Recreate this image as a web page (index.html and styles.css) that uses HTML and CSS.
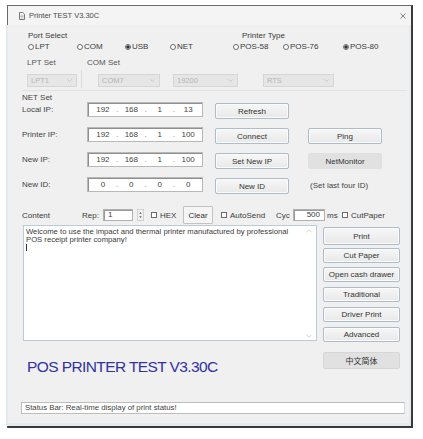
FILE: index.html
```html
<!DOCTYPE html>
<html>
<head>
<meta charset="utf-8">
<title>Printer TEST V3.30C</title>
<link rel="stylesheet" href="styles.css">
</head>
<body>
<div class="window">
  <div class="titlebar">
    <svg class="appicon" width="6" height="8" viewBox="0 0 6 8"><path d="M0.5 0.5h3.3l1.7 1.7v5.3h-5z" fill="#fff" stroke="#6a6a6a" stroke-width="0.9"/><path d="M1.4 3.2h3.2M1.4 4.6h3.2M1.4 6h3.2" stroke="#8a8a8a" stroke-width="0.6"/></svg>
    <span class="title">Printer TEST V3.30C</span>
    <svg class="close" width="6" height="6" viewBox="0 0 6 6"><path d="M0.5 0.5l5 5M5.5 0.5l-5 5" stroke="#666" stroke-width="0.8"/></svg>
  </div>
  <div class="client">
    <div class="toprow">
      <div class="grp port">
        <div class="glabel">Port Select</div>
        <div class="radios">
          <span class="radio r49"><i class="dot"></i>LPT</span>
          <span class="radio r48"><i class="dot"></i>COM</span>
          <span class="radio r45"><i class="dot on"></i>USB</span>
          <span class="radio"><i class="dot"></i>NET</span>
        </div>
      </div>
      <div class="grp ptype">
        <div class="glabel ind">Printer Type</div>
        <div class="radios">
          <span class="radio r50"><i class="dot"></i>POS-58</span>
          <span class="radio r60"><i class="dot"></i>POS-76</span>
          <span class="radio"><i class="dot on"></i>POS-80</span>
        </div>
      </div>
    </div>

    <div class="sets">
      <div class="lptset">
        <div class="slabel">LPT Set</div>
        <div class="combo w50"><span>LPT1</span><svg width="5" height="3" viewBox="0 0 5 3"><path d="M0.3 0.3l2.2 2.2 2.2-2.2" fill="none" stroke="#bbb" stroke-width="0.7"/></svg></div>
      </div>
      <div class="vsep"></div>
      <div class="comset">
        <div class="slabel">COM Set</div>
        <div class="combos">
          <div class="combo w62"><span>COM7</span><svg width="5" height="3" viewBox="0 0 5 3"><path d="M0.3 0.3l2.2 2.2 2.2-2.2" fill="none" stroke="#bbb" stroke-width="0.7"/></svg></div>
          <div class="combo w65 gap13"><span>19200</span><svg width="5" height="3" viewBox="0 0 5 3"><path d="M0.3 0.3l2.2 2.2 2.2-2.2" fill="none" stroke="#bbb" stroke-width="0.7"/></svg></div>
          <div class="combo w71 gap25"><span>RTS</span><svg width="5" height="3" viewBox="0 0 5 3"><path d="M0.3 0.3l2.2 2.2 2.2-2.2" fill="none" stroke="#bbb" stroke-width="0.7"/></svg></div>
        </div>
      </div>
    </div>

    <div class="hsep"></div>

    <div class="netlabel">NET Set</div>
    <div class="netrow">
      <div class="lbl">Local IP:</div>
      <div class="ipbox"><span class="oct">192</span><span class="ipdot">.</span><span class="oct">168</span><span class="ipdot">.</span><span class="oct">1</span><span class="ipdot">.</span><span class="oct">13</span></div>
      <div class="btn b74 first">Refresh</div>
    </div>
    <div class="netrow">
      <div class="lbl">Printer IP:</div>
      <div class="ipbox"><span class="oct">192</span><span class="ipdot">.</span><span class="oct">168</span><span class="ipdot">.</span><span class="oct">1</span><span class="ipdot">.</span><span class="oct">100</span></div>
      <div class="btn b74 first">Connect</div>
      <div class="btn b74 second">Ping</div>
    </div>
    <div class="netrow">
      <div class="lbl">New IP:</div>
      <div class="ipbox"><span class="oct">192</span><span class="ipdot">.</span><span class="oct">168</span><span class="ipdot">.</span><span class="oct">1</span><span class="ipdot">.</span><span class="oct">100</span></div>
      <div class="btn b74 first">Set New IP</div>
      <div class="btn b74 second flat">NetMonitor</div>
    </div>
    <div class="netrow">
      <div class="lbl">New ID:</div>
      <div class="ipbox"><span class="oct">0</span><span class="ipdot">.</span><span class="oct">0</span><span class="ipdot">.</span><span class="oct">0</span><span class="ipdot">.</span><span class="oct">0</span></div>
      <div class="btn b74 first">New ID</div>
      <div class="note">(Set last four ID)</div>
    </div>

    <div class="ctrlrow">
      <span class="c-content">Content</span>
      <span class="c-rep">Rep:</span>
      <span class="edit spin">1</span>
      <span class="spinbtn"><svg width="6" height="12" viewBox="0 0 6 12"><path d="M1.5 4.5L3 2.5 4.5 4.5z M1.5 7.5L3 9.5 4.5 7.5z" fill="#555"/></svg></span>
      <span class="chk c-hex"><i class="box"></i>HEX</span>
      <span class="btn clear">Clear</span>
      <span class="chk c-auto"><i class="box"></i>AutoSend</span>
      <span class="c-cyc">Cyc</span>
      <span class="edit cyc">500</span>
      <span class="c-ms">ms</span>
      <span class="chk"><i class="box"></i>CutPaper</span>
    </div>

    <div class="main">
      <div class="leftcol">
        <div class="textarea">
          <div class="tatext">Welcome to use the impact and thermal printer manufactured by professional<br>POS receipt printer company!<br><span class="caret"></span></div>
          <div class="scroll">
            <svg width="6" height="4" viewBox="0 0 6 4"><path d="M0.5 3.3L3 0.8 5.5 3.3" fill="none" stroke="#c4c4c4" stroke-width="0.8"/></svg>
            <svg width="6" height="4" viewBox="0 0 6 4"><path d="M0.5 0.7L3 3.2 5.5 0.7" fill="none" stroke="#c4c4c4" stroke-width="0.8"/></svg>
          </div>
        </div>
        <div class="bigtitle">POS PRINTER TEST V3.30C</div>
      </div>
      <div class="rightcol">
        <div class="btn rb print">Print</div>
        <div class="btn rb m3">Cut Paper</div>
        <div class="btn rb m4">Open cash drawer</div>
        <div class="btn rb m5">Traditional</div>
        <div class="btn rb m5">Driver Print</div>
        <div class="btn rb m5">Advanced</div>
        <div class="btn rb flat cn">中文简体</div>
      </div>
    </div>

    <div class="status">Status Bar: Real-time display of print status!</div>
  </div>
</div>
</body>
</html>
```

FILE: styles.css
```css
* { box-sizing: border-box; }
html, body { margin: 0; padding: 0; background: #ffffff; }
body {
  font-family: "Liberation Sans", Arial, sans-serif;
  font-size: 8px;
  color: #3a3a3a;
}
.window {
  margin: 5px 0 0 7px;
  width: 406px;
  height: 423px;
  border: 1px solid #6a6a6a;
  border-right: 2px solid #3a3a3a;
  border-bottom: 2px solid #3a3a3a;
  background: #f0f0f0;
  display: flex;
  flex-direction: column;
}
.titlebar {
  height: 19px;
  display: flex;
  align-items: center;
  background: #f4f4f4;
  flex: none;
}
.appicon { margin-left: 11px; flex: none; }
.title { margin-left: 4px; font-size: 7.5px; color: #4a4a4a; }
.close { margin-left: auto; margin-right: 5px; }

.client {
  flex: 1;
  padding-left: 14px;
  border-left: 2px solid #e3ebee;
  border-right: 2px solid #e3ebee;
  border-bottom: 3px solid #e3ebee;
  margin-left: -2px;
}

/* top radio groups */
.toprow { display: flex; margin-top: 6px; padding-left: 6px; }
.port { width: 205px; }
.glabel { height: 10px; line-height: 10px; }
.glabel.ind { margin-left: 9px; }
.radios { display: flex; align-items: center; height: 11px; }
.radio { display: flex; align-items: center; flex: none; }
.r45 { width: 45px; } .r48 { width: 48px; } .r49 { width: 49px; }
.r50 { width: 50px; } .r60 { width: 60px; }
.dot {
  width: 6px; height: 6px;
  border: 0.8px solid #6b6b6b;
  border-radius: 50%;
  background: #fff;
  margin-right: 1px;
  flex: none;
}
.dot.on { background: radial-gradient(circle, #333 0 1.4px, #fff 1.9px); }

/* settings combos */
.sets { display: flex; margin-top: 6px; padding-left: 5px; }
.lptset { width: 50px; flex: none; }
.slabel { height: 10px; line-height: 10px; color: #555; }
.combo {
  margin-top: 6px;
  height: 13px;
  border: 1px solid #d6d6d6;
  background: #e6e6e6;
  color: #b5b5b5;
  display: flex;
  align-items: center;
  justify-content: space-between;
  padding: 0 4px 0 3px;
  font-size: 7.5px;
}
.w50 { width: 50px; } .w62 { width: 62px; } .w65 { width: 65px; } .w71 { width: 71px; }
.gap13 { margin-left: 13px; } .gap25 { margin-left: 25px; }
.vsep { width: 1px; background: #dadada; margin: 12px 5px 0 4px; height: 18px; flex: none; }
.comset { flex: none; }
.combos { display: flex; margin-left: 11px; }

.hsep { margin-top: 2px; height: 1px; background: #e2e2e2; margin-right: 2px; }

/* NET */
.netlabel { margin-top: 2px; height: 9px; line-height: 9px; color: #444; }
.netrow { display: flex; align-items: flex-start; height: 25px; }
.netrow .lbl { width: 65px; line-height: 15px; flex: none; color: #444; }
.ipbox {
  width: 116px; height: 15px; flex: none;
  border: 1px solid #b8b8b8;
  box-shadow: inset 1px 1px 0 #8f8f8f;
  background: #fff;
  display: flex;
  align-items: center;
  padding: 0 1px 0 2px;
  color: #444;
}
.oct { width: 26px; text-align: center; }
.ipdot { width: 2.66px; text-align: center; color: #777; }
.btn {
  display: flex;
  align-items: center;
  justify-content: center;
  border: 1px solid #acbccb;
  border-radius: 2px;
  background: linear-gradient(#f7f7f7, #e8e8e8);
  box-shadow: inset 0 0 0 1px #fbfbfb;
  color: #333;
  flex: none;
  white-space: nowrap;
}
.btn.flat {
  border-color: #e0e0e0;
  background: #e1e1e1;
  box-shadow: none;
}
.b74 { width: 74px; height: 16px; margin-top: 1px; }
.b74.first { margin-left: 12px; }
.b74.second { margin-left: 19px; }
.note { margin-left: 21px; margin-top: 1px; line-height: 16px; color: #444; }

/* controls row */
.ctrlrow { display: flex; align-items: center; height: 18px; margin-top: 4px; }
.ctrlrow > span { flex: none; }
.c-content { width: 60px; }
.c-rep { width: 21px; }
.edit {
  height: 12px;
  border: 1px solid #b0b0b0;
  box-shadow: inset 1px 1px 0 #9a9a9a;
  background: #fff;
  line-height: 10px;
}
.spin { width: 30px; padding-left: 4px; }
.spinbtn {
  margin-left: 4px; width: 7px; height: 12px;
  border: 1px solid #d0d0d0; background: #f2f2f2;
  display: flex; align-items: center; justify-content: center;
}
.chk { display: flex; align-items: center; }
.chk .box {
  width: 6px; height: 6px;
  border: 0.8px solid #6b6b6b;
  background: #fff;
  margin-right: 3px;
  flex: none;
}
.c-hex { margin-left: 7px; width: 32px; }
.btn.clear {
  width: 30px; height: 18px;
  border-radius: 1px;
  border-color: #c2c2c2;
  background: #f5f5f5;
  box-shadow: none;
}
.c-auto { margin-left: 8px; width: 55px; }
.c-cyc { width: 17px; }
.edit.cyc { width: 32px; text-align: right; padding-right: 4px; }
.c-ms { margin-left: 2px; width: 15px; }

/* main */
.main { display: flex; align-items: flex-start; margin-top: 1px; }
.leftcol { width: 295px; flex: none; }
.textarea {
  margin-left: 1px;
  width: 294px;
  height: 116px;
  border: 1px solid #b9cbd7;
  background: #fff;
  display: flex;
}
.tatext {
  flex: 1;
  padding: 2px 0 0 2px;
  font-size: 7.7px;
  line-height: 7.8px;
  color: #3a3a3a;
  white-space: nowrap;
}
.caret { display: inline-block; width: 0.6px; height: 7px; background: #333; vertical-align: top; }
.scroll {
  width: 14px;
  display: flex;
  flex-direction: column;
  justify-content: space-between;
  align-items: center;
  padding: 3px 0 2px 0;
  flex: none;
}
.bigtitle {
  margin-top: 17px;
  margin-left: 5px;
  font-size: 15.5px;
  letter-spacing: -0.6px;
  line-height: 18px;
  color: #3131a3;
  white-space: nowrap;
}
.rightcol { margin-left: 6px; width: 77px; padding-top: 2px; flex: none; }
.rb { width: 77px; height: 15px; }
.rb.print { height: 18px; }
.m3 { margin-top: 3px; } .m4 { margin-top: 4px; } .m5 { margin-top: 5px; }
.rb.cn {
  margin-top: 10px; height: 17px;
  font-family: "Noto Sans CJK SC", "Liberation Sans", sans-serif;
  font-size: 8px;
  border-color: #d6d6d6;
}

.status {
  margin-top: 26px;
  margin-left: -1px;
  width: 384px;
  height: 12px;
  border: 1px solid #bdbdbd;
  border-right-color: #d8d8d8;
  background: #fff;
  font-size: 7.8px;
  line-height: 10px;
  padding-left: 3px;
  color: #444;
  white-space: nowrap;
}
```
